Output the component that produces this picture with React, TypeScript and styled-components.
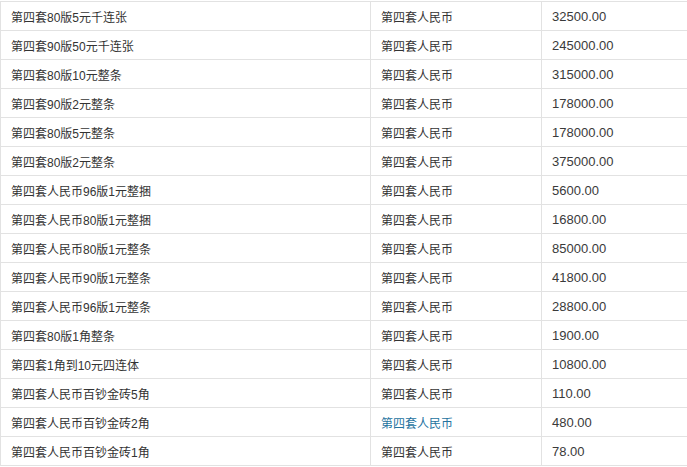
import React from 'react';
import styled, {createGlobalStyle} from 'styled-components';

const GlobalStyle = createGlobalStyle`
  html, body {
    margin: 0;
    padding: 0;
    background: #fff;
    overflow: hidden;
  }

  body {
    font-family: "Liberation Sans", Arial, "Noto Sans CJK SC", sans-serif;
  }
`;

const Wrapper = styled.div`
  padding-top: 1px;
  width: 687px;
  overflow: hidden;
`;

const Table = styled.table`
  border-collapse: collapse;
  width: 687px;
  table-layout: fixed;
`;

const Cell = styled.td<{ $width: number }>`
  width: ${p => p.$width}px;
  height: 28px;
  padding: 0 0 0 10px;
  border: 1px solid #e2e2e2;
  font-size: 12px;
  color: #333;
  vertical-align: middle;
  white-space: nowrap;
  box-sizing: content-box;
`;

const Amount = styled(Cell)`
  font-size: 13px;
  color: #3a3a3a;
  border-right: none;
`;

const SeriesLink = styled.a<{ $active?: boolean }>`
  color: ${p => p.$active ? '#24739f' : '#333'};
  text-decoration: none;
`;

const rows: [string, string][] = [
    ['第四套80版5元千连张', '32500.00'],
    ['第四套90版50元千连张', '245000.00'],
    ['第四套80版10元整条', '315000.00'],
    ['第四套90版2元整条', '178000.00'],
    ['第四套80版5元整条', '178000.00'],
    ['第四套80版2元整条', '375000.00'],
    ['第四套人民币96版1元整捆', '5600.00'],
    ['第四套人民币80版1元整捆', '16800.00'],
    ['第四套人民币80版1元整条', '85000.00'],
    ['第四套人民币90版1元整条', '41800.00'],
    ['第四套人民币96版1元整条', '28800.00'],
    ['第四套80版1角整条', '1900.00'],
    ['第四套1角到10元四连体', '10800.00'],
    ['第四套人民币百钞金砖5角', '110.00'],
    ['第四套人民币百钞金砖2角', '480.00'],
    ['第四套人民币百钞金砖1角', '78.00'],
];

const App = () => {
    return <Wrapper>
        <GlobalStyle/>
        <Table>
            <tbody>
            {rows.map(([name, price], i) =>
                <tr key={i}>
                    <Cell $width={359}>{name}</Cell>
                    <Cell $width={160}>
                        <SeriesLink href="#" $active={i === 14}>第四套人民币</SeriesLink>
                    </Cell>
                    <Amount $width={135}>{price}</Amount>
                </tr>
            )}
            </tbody>
        </Table>
    </Wrapper>;
};

export default App;
